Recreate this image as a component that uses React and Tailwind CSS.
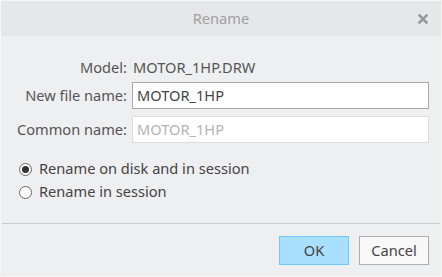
export default function App() {
  return (
    <div
      className="w-[442px] h-[277px] bg-[#eeeff1] border border-[#f6f6f7] flex flex-col overflow-hidden text-[14.6px] text-[#444]"
      style={{ fontFamily: '"Noto Sans", "Open Sans", sans-serif' }}
    >
      {/* title bar */}
      <div className="h-[35px] bg-[#e6e7e9] flex items-center relative shrink-0">
        <div className="flex-1 text-center text-[#a0a0a0] text-[14.6px]">Rename</div>
        <div className="absolute right-[13px] top-[13px]">
          <svg width="10" height="10" viewBox="0 0 10 10">
            <path d="M1.5 1.5 L8.5 8.5 M8.5 1.5 L1.5 8.5" stroke="#9a9a9a" strokeWidth="2.6" strokeLinecap="square" />
          </svg>
        </div>
      </div>

      {/* fields */}
      <div className="grid grid-cols-[126px_1fr] gap-x-[5px] items-center pr-[12px] pt-[21px]">
        <div className="text-right h-[20px] leading-[20px] text-[#555]">Model:</div>
        <div className="h-[20px] leading-[20px] pl-[1px] text-[#555]">MOTOR_1HP.DRW</div>

        <div className="text-right mt-[5px] text-[#555]">New file name:</div>
        <div className="mt-[5px] h-[27px] bg-white border border-[#a9a9a9] flex items-center px-[4px] text-[#444]">
          MOTOR_1HP
        </div>

        <div className="text-right mt-[7px] text-[#555]">Common name:</div>
        <div className="mt-[7px] h-[27px] bg-white border border-[#dcdcdc] flex items-center px-[4px] text-[#b4b4b4]">
          MOTOR_1HP
        </div>
      </div>

      {/* radios */}
      <div className="flex flex-col pl-[18px] mt-[16px] gap-[3px]">
        <div className="flex items-center h-[20px] gap-[7px]">
          <div className="w-[13px] h-[13px] rounded-full border border-[#666] bg-white flex items-center justify-center">
            <div className="w-[7px] h-[7px] rounded-full bg-[#333]" />
          </div>
          <span className="text-[#444]">Rename on disk and in session</span>
        </div>
        <div className="flex items-center h-[20px] gap-[7px]">
          <div className="w-[13px] h-[13px] rounded-full border border-[#666] bg-white" />
          <span className="text-[#444]">Rename in session</span>
        </div>
      </div>

      {/* separator */}
      <div className="mt-[21px] mx-[1px] h-[1px] bg-[#cbcbcb]" />

      {/* buttons */}
      <div className="flex justify-end gap-[10px] pr-[12px] mt-[12px]">
        <button className="w-[70px] h-[29px] bg-[#a9e0ff] border border-[#6cc8f5] text-[#444] text-[14.6px]">
          OK
        </button>
        <button className="w-[70px] h-[29px] bg-[#f8f8f8] border border-[#adadad] text-[#444] text-[14.6px]">
          Cancel
        </button>
      </div>
    </div>
  )
}
